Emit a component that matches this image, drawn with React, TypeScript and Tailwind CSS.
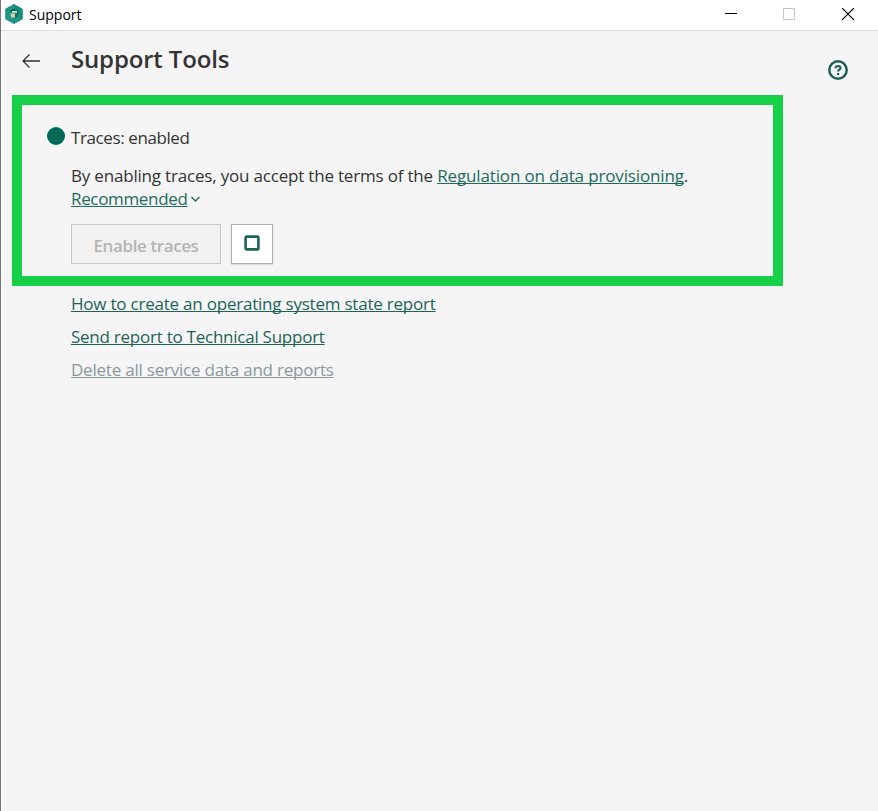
import type { ReactNode } from 'react';

interface LinkProps {
  children: ReactNode;
  className?: string;
}

function TextLink({ children, className = '' }: LinkProps) {
  return (
    <a
      href="#"
      className={`underline decoration-1 underline-offset-[1px] [text-decoration-skip-ink:none] ${className}`}
    >
      {children}
    </a>
  );
}

function AppLogo() {
  return (
    <svg className="w-[18px] h-5" viewBox="0 0 18 20" fill="none">
      <path d="M9 .5 17.2 5v10L9 19.5.8 15V5z" fill="#1a9a86" stroke="#1a8a78" strokeLinejoin="round" />
      <path d="M9 .5 17.2 5v10L9 10z" fill="#128f7a" />
      <path d="M4.500 7 8 5l5.500 1.500V10l-5-1z" fill="#0a5a54" />
      <path d="M7 7h5v1.800H7z" fill="#c9eee6" />
      <path d="M5.500 9.500H10v4H6z" fill="#d9cfa6" />
      <path d="M10 10.500h3l-1 3h-2z" fill="#17635b" />
    </svg>
  );
}

function TitleBar() {
  return (
    <header className="flex h-[31px] items-start justify-between border-b border-[#dedede] bg-white">
      <div className="flex gap-[6px] pt-1 pl-1">
        <AppLogo />
        <span className="pt-px text-[14px] leading-5 text-black">Support</span>
      </div>
      <div className="flex pt-2 pr-6">
        <svg className="mr-[46px] h-3 w-3" viewBox="0 0 12 12" shapeRendering="crispEdges">
          <path d="M0 5h12v1H0z" fill="#000" />
        </svg>
        <svg className="mr-[47px] h-3 w-3" viewBox="0 0 12 12" fill="none">
          <path d="M.5.5h11v11H.5z" stroke="#c6c6c6" />
        </svg>
        <svg className="h-3 w-3" viewBox="0 0 12 12" fill="none">
          <path d="m0 0 12 12M12 0 0 12" stroke="#000" strokeWidth="1.200" />
        </svg>
      </div>
    </header>
  );
}

export default function App() {
  return (
    <div className="flex h-[811px] w-[878px] flex-col overflow-hidden border-l border-[#777] bg-[#f5f5f5] font-['Open_Sans','Noto_Sans',sans-serif] text-[17px] text-[#333]">
      <TitleBar />

      {/* Heading */}
      <div className="flex h-16 items-start pr-[30px]">
        <button className="mt-[22px] ml-[21px] h-4 w-[18px]" aria-label="Back">
          <svg className="h-4 w-[18px]" viewBox="0 0 18 16" fill="none" stroke="#333" strokeWidth="1.300">
            <path d="M18 8H1M7.500 1.500 1 8l6.500 6.500" />
          </svg>
        </button>
        <h1 className="mt-3 ml-[31px] grow text-[24px] leading-8 font-semibold tracking-[-0.16px]">Support Tools</h1>
        <button className="mt-[29px]" aria-label="Help">
          <svg className="h-5 w-5" viewBox="0 0 20 20" fill="none" stroke="#1d5f54">
            <circle cx="10" cy="10" r="8.700" strokeWidth="2.500" />
            <path d="M7.500 8.300C7.500 6.800 8.500 6 10 6s2.500.8 2.500 2c0 1.600-2.400 1.700-2.400 3.600" strokeWidth="2.200" />
            <path d="M9 13h2.200v2H9z" fill="#1d5f54" stroke="none" />
          </svg>
        </button>
      </div>

      {/* Traces */}
      <section className="ml-[11px] h-[191px] w-[771px] border-10 border-[#16d048] pl-[25px]">
        <div className="flex h-[45px] items-end gap-[6px]">
          <span className="mb-[5px] h-[18px] w-[18px] rounded-full bg-[#046b5c]" />
          <span className="leading-6 tracking-[-0.4px]">Traces: enabled</span>
        </div>
        <div className="mt-[14px] pl-6 leading-[23px]">
          <p className="tracking-[-0.19px]">
            By enabling traces, you accept the terms of the{' '}
            <TextLink className="tracking-[-0.14px] text-[#1d6b5d]">Regulation on data provisioning</TextLink>.
          </p>
          <div className="flex items-center gap-1">
            <TextLink className="tracking-[-0.34px] text-[#1d6b5d]">Recommended</TextLink>
            <svg className="h-[6px] w-[9px]" viewBox="0 0 9 6" fill="none" stroke="#1d6b5d" strokeWidth="1.300">
              <path d="m.5 1 4 4 4-4" />
            </svg>
          </div>
          <div className="mt-[14px] flex gap-[10px]">
            <button
              className="h-10 w-[150px] border border-[#c8c8c8] bg-[#f1f1f1] pt-[3px] font-semibold tracking-[-0.4px] text-[#b5b5b5]"
              disabled
            >
              Enable traces
            </button>
            <button
              className="flex h-10 w-[42px] items-center justify-center border border-[#b0b0b0] bg-white shadow-[0_1px_1px_#ddd]"
              aria-label="Stop"
            >
              <svg className="mb-[2px] h-4 w-4" viewBox="0 0 16 16" fill="none">
                <rect x="1.600" y="1.600" width="12.800" height="12.800" rx="1.200" stroke="#1d6459" strokeWidth="2.600" />
              </svg>
            </button>
          </div>
        </div>
      </section>

      <nav className="mt-[6px] flex flex-col items-start gap-[9px] pl-[70px] leading-6 tracking-[-0.22px] text-[#1d6357]">
        <TextLink>How to create an operating system state report</TextLink>
        <TextLink className="tracking-[-0.25px]">Send report to Technical Support</TextLink>
        <TextLink className="text-[#8b999b]">Delete all service data and reports</TextLink>
      </nav>
    </div>
  );
}
